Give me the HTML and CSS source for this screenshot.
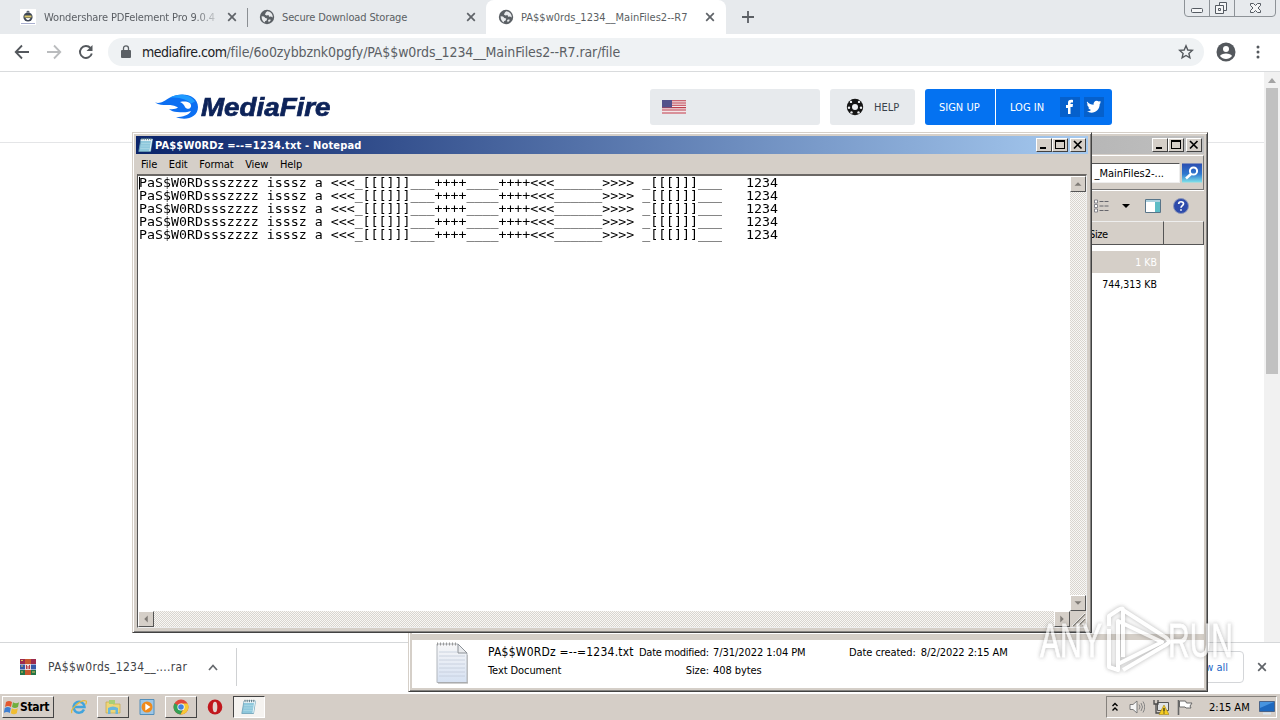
FILE: index.html
```html
<!DOCTYPE html>
<html lang="en">
<head>
<meta charset="utf-8">
<title>Desktop</title>
<link rel="stylesheet" href="styles.css">
</head>
<body>
<svg width="0" height="0" class="defs">
  <defs>
    <symbol id="globe" viewBox="0 0 16 16"><circle cx="8" cy="8" r="7.2" fill="#5b6065"/><path d="M2.6 7.2 5 7.6l1.4 1.5 1.8.5-.6 1.8-1.7.8.2 1.3C3.800 12.700 2.500 10.500 2.600 7.200zM8.200 2.300 6.900 3.500l-1 2 1.600.9 2-.3.600 1.700 1.900-.2 1.700.8c.4-3-1.900-5.900-5.500-6.100zM9 11l2.300-.8.300 1.600-1.900 1.500z" fill="#e9ebed"/></symbol>
    <symbol id="close" viewBox="0 0 10 10"><path d="M1.200 1.200 8.800 8.800M8.800 1.200 1.200 8.800" stroke="#5f6368" stroke-width="1.700" fill="none"/></symbol>
    <symbol id="notepad" viewBox="0 0 16 16"><path d="M3 2h11.500l-2 12.500H.8z" fill="#8fc8dc" stroke="#6b9fb6" stroke-width=".8"/><path d="M3 2h11.500l-.4 2H2.800z" fill="#e9f6fb"/><path d="M3.200 6.500h9M2.800 9h9M2.400 11.500h9" stroke="#a4d4e3"/><path d="M13.500 4l-1.600 10" stroke="#e6f5f9"/><path d="M4 .8v2.400M6.200.8v2.400M8.400.8v2.400M10.600.8v2.400M12.800.8v2.400" stroke="#536b74" stroke-width=".9"/></symbol>
    <symbol id="min" viewBox="0 0 14 12"><path d="M3 8h6v2H3z"/></symbol>
    <symbol id="max" viewBox="0 0 14 12"><path d="M2 1h10v9H2zM3 3v6h8V3z" fill-rule="evenodd"/></symbol>
    <symbol id="x" viewBox="0 0 14 12"><path d="M3 2l7.500 7.500M10.500 2 3 9.500" stroke="#000" stroke-width="1.700"/></symbol>
  </defs>
</svg>

<div class="desktop">
  <div class="browser">
    <div class="tabs">
      <div class="tab tab-one">
        <svg class="fav" viewBox="0 0 16 16"><path fill="#fff" d="M0 0h16v16H0z"/><circle cx="8" cy="8" r="4.600" fill="#3d4656"/><path d="M4.500 6.500h7v2h-7z" fill="#d9c66b"/><path d="M5.500 9h5l-1.500 2H7z" fill="#eee"/><path d="M6.500 2.500l1.500-1 1.500 1v1h-3z" fill="#596270"/><path d="M1 14.500h14" stroke="#a9afcf"/></svg>
        <span class="tab-title faded">Wondershare PDFelement Pro 9.0.4</span>
        <svg class="tab-x"><use href="#close"/></svg>
      </div>
      <div class="tab tab-two">
        <svg class="fav"><use href="#globe"/></svg>
        <span class="tab-title">Secure Download Storage</span>
        <svg class="tab-x"><use href="#close"/></svg>
      </div>
      <div class="tab tab-active">
        <svg class="fav"><use href="#globe"/></svg>
        <span class="tab-title title-active">PA$$w0rds_1234__MainFiles2--R7</span>
        <svg class="tab-x"><use href="#close"/></svg>
      </div>
      <svg class="plus" viewBox="0 0 12 12"><path d="M6 0v12M0 6h12" stroke="#5b5f64" stroke-width="1.800"/></svg>
      <svg class="caption" viewBox="0 0 92 17"><path d="M.5 0v13q0 3.500 3.500 3.500h84q3.500 0 3.500-3.500V0M25.500 0v16M50.500 0v16" fill="none" stroke="#8d9297"/><g fill="#f5f6f7" stroke="#555b62"><rect x="7.500" y="8.500" width="11" height="4" rx="1"/><path d="M35.500 2.500h7v8h-7z"/><path d="M31.500 5.500h8v8h-8z"/><path d="M34.500 8.500h2v2h-2z"/><path d="M66.500 3.500h3l2 2 2-2h3v2L74 8l2.500 2.500v2h-3l-2-2-2 2h-3v-2L69 8l-2.500-2.500z"/></g></svg>
    </div>
    <div class="toolbar">
      <svg class="nav" viewBox="0 0 16 16"><path d="M15 8H2M8 1.500 1.700 8 8 14.500" fill="none" stroke="#54585d" stroke-width="1.800"/></svg>
      <svg class="nav" viewBox="0 0 16 16"><path d="M1 8h13M8 1.500 14.300 8 8 14.500" fill="none" stroke="#babcbe" stroke-width="1.800"/></svg>
      <svg class="nav" viewBox="0 0 16 16"><path d="M13.800 9.500A6 6 0 1 1 12.500 4" fill="none" stroke="#54585d" stroke-width="1.900"/><path d="M14.500 1v6h-6z" fill="#54585d"/></svg>
      <div class="omnibox">
        <svg class="lock" viewBox="0 0 10 13"><path d="M1 5h8q1 0 1 1v6q0 1-1 1H1q-1 0-1-1V6q0-1 1-1z" fill="#5b6065"/><path d="M2.500 5.500V3.300a2.500 2.500 0 0 1 5 0v2.200" fill="none" stroke="#5b6065" stroke-width="1.300"/></svg>
        <span class="url"><b>mediafire.com</b>/file/6o0zybbznk0pgfy/PA$$w0rds_1234__MainFiles2--R7.rar/file</span>
        <svg class="star" viewBox="0 0 16 16"><path d="m8 1.800 1.800 4.200 4.500.4-3.400 3 1 4.400L8 11.500l-3.900 2.300 1-4.400-3.400-3 4.500-.4z" fill="none" stroke="#54585d" stroke-width="1.400"/></svg>
      </div>
      <svg class="avatar" viewBox="0 0 20 20"><circle cx="10" cy="10" r="9.500" fill="#54585d"/><circle cx="10" cy="7" r="3" fill="#fff"/><path d="M4 14c1-3.500 11-3.500 12 0-3 4-9 4-12 0z" fill="#fff"/></svg>
      <svg class="dots" viewBox="0 0 4 14"><g fill="#54585d"><circle cx="2" cy="2" r="1.500"/><circle cx="2" cy="7" r="1.500"/><circle cx="2" cy="12" r="1.500"/></g></svg>
    </div>
    <div class="page">
      <div class="site">
        <div class="site-head">
          <svg class="flame" viewBox="0 0 46 28"><path d="M2 9.500C8 11 11 8 17 4.500 29-2 45 2 45 14c0 11-13 14-22 10 7 0 13-2 15-6-5 2-10 1-14 1-3 0-6-1-8-3 4 .5 7 0 9-1.500-4-2-6-2.500-11-2.500-4.500 0-8 0-12-2.500z" fill="#0c6ff2"/><path d="M17 4.500c9-5 21-3 25 4l-4 2c-5-5-12-6-21-6z" fill="#1f9bff"/><path d="M27 9c3 1 4 3 5 5s5 3 6-.5c1-4-5-6-11-4.500z" fill="#fff"/></svg>
          <span class="brand">MediaFire</span>
          <div class="lang"><svg viewBox="0 0 24 14"><path fill="#f3e7e9" d="M0 0h24v14H0z"/><path d="M0 .7h24M0 3h24M0 5.300h24M0 7.600h24M0 10h24M0 13h24" stroke="#bd3d4c" stroke-width="1.100"/><path d="M0 0h10v7.500H0z" fill="#53518b"/></svg></div>
          <div class="help"><svg viewBox="0 0 18 18"><circle cx="9" cy="9" r="8.200" fill="#151515"/><circle cx="9" cy="9" r="3" fill="#eef0f2"/><g fill="#eef0f2"><circle cx="5" cy="3.900" r="1.200"/><circle cx="13" cy="3.900" r="1.200"/><circle cx="3" cy="9.800" r="1.200"/><circle cx="15" cy="9.800" r="1.200"/><circle cx="5.500" cy="14.400" r="1.200"/><circle cx="12.500" cy="14.400" r="1.200"/></g></svg><span>HELP</span></div>
          <div class="signup">SIGN UP</div>
          <div class="login"><span>LOG IN</span>
            <svg viewBox="0 0 20 20"><path d="M0 0h20v20H0z" fill="#0560cc"/><path d="M8 17v-6H6V8h2V6c0-2.400 1.300-3.600 5-3v2.500h-1.500c-.8 0-1 .5-1 1.500h2.500l-.4 3h-2.100v7z" fill="#fff"/></svg>
            <svg viewBox="0 0 20 20"><path d="M0 0h20v20H0z" fill="#0560cc"/><path d="M3 4.500C5 6.700 7.200 7.700 9.600 7.800c-.6-3.600 3-5.400 5.200-3.200l2-.7-1.100 1.800 1.500-.4-1.500 1.700c.2 6.500-6.800 11-12.700 7.300 1.800.1 3-.4 4-1.400-1.400-.1-2.300-1-2.700-2.300h1.200C3.900 9.900 3.200 8.600 3.200 7.100l1.100.4C3 6.500 2.600 5.500 3 4.500z" fill="#fff"/></svg>
          </div>
        </div>
      </div>
      <div class="page-scroll"><svg viewBox="0 0 8 5"><path d="M4 0l4 5H0z" fill="#a3a3a3"/></svg><i></i></div>
    </div>
    <div class="downloads">
      <svg class="rar" viewBox="0 0 16 16"><path d="M0 0h16v5H0z" fill="#9c2a4d"/><path d="M0 5.500h16v5H0z" fill="#3758a8"/><path d="M0 11h16v5H0z" fill="#247446"/><path d="M5 0h6v16H5z" fill="#c8572f"/><path d="M5 5h6v6H5z" fill="#e9dcdc"/><path d="M6.500 6v4M9.500 6v4M8 7v3" stroke="#b73b48"/><path d="M1 1.500h2M1 7h2M1 13h2M12 13h3" stroke="#dec05b"/></svg>
      <span class="dl-name">PA$$w0rds_1234__....rar</span>
      <svg class="dl-up" viewBox="0 0 10 7"><path d="M1 6l4-4.500L9 6" fill="none" stroke="#66696d" stroke-width="1.700"/></svg>
      <div class="dl-sep"></div>
      <div class="showall">Show all</div>
      <svg class="dl-close"><use href="#close"/></svg>
    </div>
  </div>

  <div class="window explorer">
    <div class="titlebar gray">
      <div class="btns"><svg><use href="#min"/></svg><svg><use href="#max"/></svg><svg class="gap"><use href="#x"/></svg></div>
    </div>
    <div class="searchrow">
      <div class="search">_MainFiles2-...</div>
      <svg class="mag" viewBox="0 0 20 19"><defs><linearGradient id="mg" x2="0" y2="1"><stop stop-color="#2b4db0"/><stop offset=".55" stop-color="#2f78cf"/><stop offset="1" stop-color="#7fe3ea"/></linearGradient></defs><path fill="url(#mg)" d="M0 0h20v19H0z"/><circle cx="11.500" cy="7.500" r="3.600" fill="none" stroke="#fff" stroke-width="2"/><path d="m9 10.500-5 4.500" stroke="#fff" stroke-width="2.600"/></svg>
    </div>
    <div class="exp-tools">
      <svg class="views" viewBox="0 0 16 14"><g fill="#fff" stroke="#7a7a82" stroke-width=".9"><path d="M1.500 1h3v3h-3zM1.500 5.500h3v3h-3zM1.500 10h3v3h-3z"/></g><path d="M6.500 2.500h9M6.500 7h9M6.500 11.500h9" stroke="#66666c" stroke-dasharray="4 1"/></svg>
      <svg class="drop" viewBox="0 0 8 4"><path d="M0 0h8L4 4z"/></svg>
      <svg class="preview" viewBox="0 0 16 14"><path d="M.5.500h15v13H.5z" fill="#fff" stroke="#587589"/><path d="M1 1h14v2H1z" fill="#acd1df"/><path d="M10 3h5v10h-5z" fill="#5cbcc6"/></svg>
      <svg class="qmark" viewBox="0 0 16 16"><circle cx="8" cy="8" r="7.500" fill="#2e4bab" stroke="#8b96b9"/><path d="M5.700 6c0-3 4.800-2.900 4.800-.2C10.500 7.600 8 7.600 8 9.800M8 11.200v1.600" fill="none" stroke="#fff" stroke-width="1.700"/></svg>
    </div>
    <div class="cols"><span class="size">Size</span><span class="rest"></span></div>
    <div class="list">
      <div class="row selected">1 KB</div>
      <div class="row">744,313 KB</div>
    </div>
    <div class="details">
      <svg class="doc" viewBox="0 0 32 42"><defs><linearGradient id="pg" x2="0" y2="1"><stop stop-color="#f7f7f8"/><stop offset="1" stop-color="#d6e1f2"/></linearGradient></defs><path d="M1 2h21l9 9v29.500H1z" fill="url(#pg)" stroke="#b1b6bc"/><path d="M22 2v9h9z" fill="#e9ebee" stroke="#8c9197"/><path d="M3 10h18M3 14h26M3 18h26M3 22h26M3 26h26M3 30h26M3 34h26" stroke="#c3ccda" stroke-width=".8"/><path d="M1 2h21" stroke="#999" stroke-width="3" stroke-dasharray="1 2"/><path d="M2 41h30V13" fill="none" stroke="#a2a2a2"/></svg>
      <div class="d-name"><span class="fname">PA$$W0RDz =--=1234.txt</span><span class="ftype">Text Document</span></div>
      <div class="d-mod"><span>Date modified:</span><span>7/31/2022 1:04 PM</span><span>Size:</span><span>408 bytes</span></div>
      <div class="d-created"><span>Date created:</span><span>8/2/2022 2:15 AM</span></div>
    </div>
  </div>

  <div class="window notepad">
    <div class="titlebar blue">
      <svg class="np-icon"><use href="#notepad"/></svg>
      <span class="np-title">PA$$W0RDz =--=1234.txt - Notepad</span>
      <div class="btns"><svg><use href="#min"/></svg><svg><use href="#max"/></svg><svg class="gap"><use href="#x"/></svg></div>
    </div>
    <div class="menu"><span>File</span><span>Edit</span><span>Format</span><span>View</span><span>Help</span></div>
    <div class="edit">
<pre class="text">PaS$W0RDssszzzz isssz a &lt;&lt;&lt;_[[[]]]___++++____++++&lt;&lt;&lt;______&gt;&gt;&gt;&gt; _[[[]]]___   1234
PaS$W0RDssszzzz isssz a &lt;&lt;&lt;_[[[]]]___++++____++++&lt;&lt;&lt;______&gt;&gt;&gt;&gt; _[[[]]]___   1234
PaS$W0RDssszzzz isssz a &lt;&lt;&lt;_[[[]]]___++++____++++&lt;&lt;&lt;______&gt;&gt;&gt;&gt; _[[[]]]___   1234
PaS$W0RDssszzzz isssz a &lt;&lt;&lt;_[[[]]]___++++____++++&lt;&lt;&lt;______&gt;&gt;&gt;&gt; _[[[]]]___   1234
PaS$W0RDssszzzz isssz a &lt;&lt;&lt;_[[[]]]___++++____++++&lt;&lt;&lt;______&gt;&gt;&gt;&gt; _[[[]]]___   1234</pre>
      <div class="sb vert"><svg viewBox="0 0 16 16"><path d="M4 10l4-4 4 4z"/></svg><svg viewBox="0 0 16 16"><path d="M4 6l4 4 4-4z"/></svg></div>
      <div class="sb horz"><svg viewBox="0 0 16 16"><path d="M10 4 6 8l4 4z"/></svg><svg viewBox="0 0 16 16"><path d="M6 4l4 4-4 4z"/></svg></div>
      <svg class="grip" viewBox="0 0 16 16"><path d="M3 15 15 3M8 15l7-7M13 15l2-2" stroke="#827e78" stroke-width="1.600"/><path d="M2 15 15 2M7 15l8-8" stroke="#fff" stroke-width=".8"/></svg>
    </div>
  </div>

  <div class="taskbar">
    <div class="start"><svg viewBox="0 0 16 16"><path d="M2 3q3-2 6 0L7 8Q4 6 1 8z" fill="#e3582f"/><path d="M9 3.300q3 2 6 0L14 8q-3 2-6 0z" fill="#70ae3d"/><path d="M.8 9q3-2 6 0l-1 5q-3-2-6 0z" fill="#3f7fd1"/><path d="M7.800 9.300q3 2 6 0l-1 5q-3 2-6 0z" fill="#f0bd32"/></svg><b>Start</b></div>
    <div class="task"><svg viewBox="0 0 16 16"><path d="M13 10.500A5.500 5.500 0 1 1 13.500 8H4" fill="none" stroke="#42a4dc" stroke-width="2.500"/><path d="M1 14C-2 11 10 0 15 2c1 .6.400 2-.5 3.500" fill="none" stroke="#e5b93b" stroke-width="1.300"/></svg></div>
    <div class="task raised"><svg viewBox="0 0 16 16"><path d="M1 3h6l1 2h7v9H1z" fill="#edd678" stroke="#c6a74a" stroke-width=".7"/><path d="M4 1h6v4H4z" fill="#a8cf76"/><path d="M3 15V9q5-3 10 0v6h-2.500v-4h-5v4z" fill="#68b6dc"/></svg></div>
    <div class="task"><svg viewBox="0 0 16 16"><path d="M1 .500h14v15H1z" fill="#9dc6e6" stroke="#538fba"/><circle cx="8" cy="8" r="5.500" fill="#ef8a1b"/><path d="M6.300 4.500 11.500 8l-5.200 3.500z" fill="#fff"/></svg></div>
    <div class="task raised"><svg viewBox="0 0 16 16"><circle cx="8" cy="8" r="7.500" fill="#e1483a"/><path d="M8 8 1.500 4.300A7.500 7.500 0 0 0 7.500 15.500L10.500 9z" fill="#34a155"/><path d="M8 8h0L8 4.500h6.600A7.500 7.500 0 0 1 7.500 15.500L11 9.500z" fill="#f6ca35"/><circle cx="8" cy="8" r="3.600" fill="#fff"/><circle cx="8" cy="8" r="2.800" fill="#4381dd"/></svg></div>
    <div class="task"><svg viewBox="0 0 16 16"><ellipse cx="8" cy="8" rx="7.300" ry="7.600" fill="#c1171d"/><ellipse cx="8" cy="8" rx="2.300" ry="5.300" fill="#e2d5d0"/></svg></div>
    <div class="task pressed"><svg><use href="#notepad"/></svg></div>
    <div class="tray">
      <svg class="chev" viewBox="0 0 6 10"><path d="M.5 4 3 1.500 5.500 4M.5 8.500 3 6l2.500 2.500" fill="none" stroke="#000" stroke-width="1.400"/></svg>
      <svg viewBox="0 0 16 16"><path d="M1 5.500h3L8 2v12l-4-3.500H1z" fill="#f5f5f5" stroke="#707070" stroke-width=".9"/><path d="M10 5.500q2 2.500 0 5M12 4q3 4 0 8M14 2.500q3.500 5.500 0 11" fill="none" stroke="#858585"/></svg>
      <svg viewBox="0 0 16 16"><path d="M4.500 3.500h11v8h-11z" fill="#e0e3e5" stroke="#555"/><path d="M1 1v4h4V1M3 5v9h5" fill="none" stroke="#4b4b4b" stroke-width="1.300"/><path d="m11 6 5 9.500H6z" fill="#f6cc20" stroke="#a38516" stroke-width=".6"/><path d="M11 9v3.500M11 13.500v1" stroke="#222" stroke-width="1.200"/></svg>
      <svg viewBox="0 0 16 16"><path d="M1.500 1v15" stroke="#666" stroke-width="1.600"/><path d="M2.500 2h6l1 2H15l-2 3 1 2H9L8 8H2.500z" fill="#fff" stroke="#686868"/></svg>
      <span class="clock">2:15 AM</span>
      <svg viewBox="0 0 16 16"><path d="M.500 2.500h15v10H.5z" fill="#1e69bf" stroke="#4b6489"/><path d="M1 3h14L1 9z" fill="#4794df"/><path d="M4 14.500h8" stroke="#d8e5ee" stroke-width="2"/></svg>
    </div>
  </div>

  <svg class="watermark" viewBox="0 0 200 70">
    <g class="wm-text"><text x="3" y="52" textLength="62" lengthAdjust="spacingAndGlyphs">ANY</text><text x="131" y="52" textLength="65" lengthAdjust="spacingAndGlyphs">RUN</text></g>
    <path d="M72 24v38l9 3V16l44 21-44 22M86 52V5q0-3-5 0l-9 6v10M86 5l39 25q7 4 7 7-1 2-7 5L86 65" />
  </svg>
</div>
</body>
</html>
```
FILE: styles.css
```css
* { box-sizing: border-box; }
body { margin: 0; overflow: hidden; font: 11px/13px "DejaVu Sans Condensed", "DejaVu Sans", sans-serif; color: #000; }
svg { display: block; flex: none; }
.defs { position: absolute; }
.desktop { position: relative; width: 1280px; height: 720px; overflow: hidden; white-space: nowrap; }
.browser { height: 693px; display: flex; flex-direction: column; background: #fff; }

.tabs { height: 34px; background: #e7eaed; display: flex; color: #5b5f64; }
.tab { display: flex; align-items: center; height: 34px; }
.tab-one { width: 248px; padding-left: 20px; position: relative; border-right: 0; }
.tab-one::after { content: ""; position: absolute; right: 0; top: 8px; width: 1px; height: 19px; background: #8b8f93; }
.tab-two { width: 238px; padding-left: 11px; }
.tab-active { width: 240px; padding-left: 12px; background: #fff; border-radius: 8px 8px 0 0; }
.fav { width: 16px; height: 16px; margin-right: 7px; }
.tab-title { width: 182px; overflow: hidden; letter-spacing: -.13px; }
.tab-one .tab-title { margin-left: 1px; }
.title-active { width: 184px; letter-spacing: .01px; }
.faded { width: 174px; -webkit-mask-image: linear-gradient(90deg, #000 150px, transparent 178px); mask-image: linear-gradient(90deg, #000 150px, transparent 178px); }
.tab-x { width: 10px; height: 10px; margin-left: 0; }
.tab-one .tab-x { margin-left: 9px; }
.tab-two .tab-x { margin-left: 2px; }
.plus { width: 12px; height: 12px; margin: 11px 0 0 16px; }
.caption { width: 92px; height: 17px; margin: 0 4px 0 auto; }

.toolbar { height: 38px; display: flex; align-items: center; padding: 0 20px 2px 14px; border-bottom: 1px solid #d9dbdd; }
.nav { width: 16px; height: 16px; margin-right: 16px; }
.omnibox { width: 1096px; height: 28px; margin-left: -2px; border-radius: 14px; background: #eff2f4; display: flex; align-items: center; padding: 0 10px 0 13px; }
.lock { width: 10px; height: 13px; margin-right: 11px; }
.url { font-size: 14px; line-height: 18px; color: #5b5f64; letter-spacing: -.11px; }
.url b { font-weight: 400; color: #202124; letter-spacing: -.48px; }
.star { width: 16px; height: 16px; margin-left: auto; }
.avatar { width: 20px; height: 20px; margin-left: 12px; }
.dots { width: 4px; height: 14px; margin-left: 20px; }

.page { flex: 1; display: flex; }
.site { flex: 1; }
.site-head { height: 71px; border-bottom: 1px solid #e4e5e7; display: flex; align-items: center; padding-left: 153px; }
.flame { width: 46px; height: 28px; }
.brand { width: 450px; padding-left: 2px; color: #0d2359; font: italic 700 25px/30px "Liberation Sans", sans-serif; -webkit-text-stroke: .7px #0d2359; transform: scaleX(1.11); transform-origin: 2px 0; }
.lang, .help { height: 36px; border-radius: 3px; background: #e7eaed; display: flex; align-items: center; }
.lang { width: 170px; margin: 0 10px 0 1px; padding-left: 12px; }
.lang svg { width: 24px; height: 14px; }
.help { width: 85px; padding-left: 16px; color: #3a424c; margin-right: 10px; }
.help svg { width: 18px; height: 18px; margin-right: 10px; }
.signup, .login { height: 36px; background: #0472f1; color: #fff; display: flex; align-items: center; }
.signup { width: 70px; border-radius: 3px 0 0 3px; padding-left: 14px; margin-right: 1px; }
.login { width: 116px; border-radius: 0 3px 3px 0; padding-left: 14px; gap: 4px; }
.login span { width: 46px; }
.login svg { width: 20px; height: 20px; }
.page-scroll { width: 16px; background: #f1f1f1; display: flex; flex-direction: column; align-items: center; }
.page-scroll svg { width: 8px; height: 5px; margin: 6px 0 5px; }
.page-scroll i { width: 12px; height: 286px; background: #c1c1c1; }
.downloads { height: 51px; border-top: 1px solid #d5d7d9; display: flex; align-items: center; padding: 0 0 2px 20px; color: #3f4347; }
.rar { width: 16px; height: 16px; margin-right: 12px; }
.dl-name { width: 160px; font-size: 12px; line-height: 16px; letter-spacing: .31px; }
.dl-up { width: 10px; height: 7px; }
.dl-sep { width: 1px; height: 38px; background: #cfd1d3; margin-left: 18px; }
.showall { width: 82px; height: 32px; margin-left: auto; border: 1px solid #d4d6d9; border-radius: 4px; color: #2467c6; display: flex; align-items: center; justify-content: flex-end; padding-right: 15px; }
.dl-close { width: 10px; height: 10px; margin: 0 13px; }

.window { position: absolute; background: #d5cfc8; border: 1px solid #d5cfc8; border-right-color: #424242; border-bottom-color: #424242; box-shadow: inset 1px 1px #fff, inset -1px -1px #858381; padding: 3px; display: flex; flex-direction: column; }
.explorer { left: 408px; top: 132px; width: 800px; height: 560px; }
.notepad { left: 132px; top: 132px; width: 960px; height: 501px; }
.titlebar { height: 18px; display: flex; align-items: center; padding-right: 2px; flex: none; }
.gray { background: linear-gradient(90deg, #808080, #c0c0c0); }
.blue { background: linear-gradient(90deg, #0b246a, #a6caf0); color: #fff; padding-left: 2px; }
.btns { display: flex; margin-left: auto; }
.btns svg { width: 16px; height: 14px; padding: 0; background: #d5cfc8; border: 1px solid; border-color: #fff #424242 #424242 #fff; }
.btns .gap { margin-left: 2px; }

.searchrow { height: 35px; margin-top: 1px; border: 1px solid #777; border-width: 0 1px 1px 0; border-top: 1px solid #fff; display: flex; justify-content: flex-end; align-items: center; padding-right: 1px; gap: 2px; }
.search { width: 300px; height: 20px; background: #fff; border: 1px solid #555; border-color: #555 #eee #eee #555; padding: 3px 15px 0 0; text-align: right; }
.mag { width: 20px; height: 20px; }
.exp-tools { height: 31px; border-top: 1px solid #fff; display: flex; align-items: center; justify-content: flex-end; padding-right: 15px; }
.views { width: 16px; height: 14px; margin-right: 13px; }
.drop { width: 8px; height: 4px; margin-right: 15px; }
.preview { width: 16px; height: 14px; margin-right: 12px; }
.qmark { width: 16px; height: 16px; }
.cols { height: 24px; display: flex; justify-content: flex-end; }
.cols span { border: 1px solid; border-color: #eee #555 #555 #eee; border-left: 0; padding: 6px 0 0; height: 24px; }
.size { width: 75px; letter-spacing: -.4px; }
.rest { width: 40px; }
.list { flex: 1; background: #fff; padding: 6px 44px 0 0; }
.row { height: 22px; padding: 5px 3px 0 0; text-align: right; font-size: 10.5px; }
.selected { background: #d5cfc8; color: #fff; }
.details { height: 54px; border-top: 6px solid #d5cfc8; background: #fff; display: flex; padding: 2px 0 0 24px; flex: none; }
.doc { width: 32px; height: 42px; margin-right: 20px; }
.d-name { width: 151px; display: flex; flex-direction: column; gap: 5px; padding-top: 3px; }
.fname { font-size: 12px; line-height: 14px; letter-spacing: .22px; }
.ftype { letter-spacing: -.08px; }
.d-mod { width: 210px; display: grid; grid-template-columns: 70px 1fr; column-gap: 4px; row-gap: 5px; padding-top: 4px; align-content: start; letter-spacing: -.07px; }
.d-mod span:nth-child(odd) { text-align: right; }
.d-mod span:first-child { text-align: left; letter-spacing: -.26px; }
.d-created { display: flex; gap: 5px; padding-top: 4px; letter-spacing: -.08px; }

.np-icon { width: 16px; height: 16px; margin-right: 1px; }
.np-title { font-weight: 700; font-size: 11px; letter-spacing: .18px; }
.menu { height: 20px; display: flex; align-items: center; gap: 11.500px; padding-left: 5px; flex: none; letter-spacing: -.06px; }
.edit { flex: 1; margin: 0 1px 1px 1px; border: 1px solid #555; border-width: 2px 1px 1px 1px; border-color: #6b6865 #eee #eee #555; background: #fff; display: grid; grid-template: 1fr 16px / 1fr 16px; }
.text { margin: 0; padding: 1.111px 0 0 1px; font: 13.280px/14.444px "DejaVu Sans Mono", monospace; position: relative; transform: scaleY(.9); transform-origin: 0 0; }
.text::before { content: ""; position: absolute; left: 1px; top: 1px; width: 1px; height: 14px; background: #000; }
.sb { display: flex; justify-content: space-between; background: repeating-conic-gradient(#f8f7f5 0 25%, #d9d5cf 0 50%) 0 0 / 2px 2px; }
.vert { flex-direction: column; }
.sb svg, .grip { width: 16px; height: 16px; background: #d5cfc8; }
.sb svg { fill: #807c77; border: 1px solid; border-color: #fff #555 #555 #fff; }

.taskbar { height: 27px; border-top: 1px solid #fff; background: #d5cec7; display: flex; align-items: center; padding: 0 3px 0 2px; position: relative; }
.start { width: 52px; height: 22px; border: 1px solid; border-color: #fff #444 #444 #fff; display: flex; align-items: center; padding-left: 1px; gap: 0; margin-right: 9px; }
.start svg { width: 16px; height: 16px; }
.start b { font-size: 12px; letter-spacing: -.3px; }
.task { width: 32px; height: 22px; margin-right: 2px; display: flex; align-items: center; justify-content: center; }
.task svg { width: 16px; height: 16px; }
.raised { border: 1px solid; border-color: #fff #444 #444 #fff; }
.pressed { background: #f5f3f0; border: 1px solid; border-color: #444 #fff #fff #444; }
.tray { margin-left: auto; width: 171px; height: 22px; border: 1px solid; border-color: #85817c #fff #fff #85817c; display: flex; align-items: center; padding: 0 1px 0 5px; }
.tray svg { width: 16px; height: 16px; margin-right: 8px; }
.tray .chev { width: 6px; height: 10px; margin-right: 11px; }
.clock { width: 51px; margin-left: 8px; }
.tray svg:last-child { margin-right: 0; }

.watermark { position: absolute; left: 1037px; top: 605px; width: 200px; height: 70px; overflow: visible; filter: drop-shadow(0 0 2px rgba(90, 90, 90, .65)); opacity: .7; }
.watermark path { fill: none; stroke: #fff; stroke-width: 4; stroke-linejoin: round; }
.wm-text { font: 400 49px "Liberation Sans", sans-serif; fill: #fff; stroke: #fff; stroke-width: .8; }
```
